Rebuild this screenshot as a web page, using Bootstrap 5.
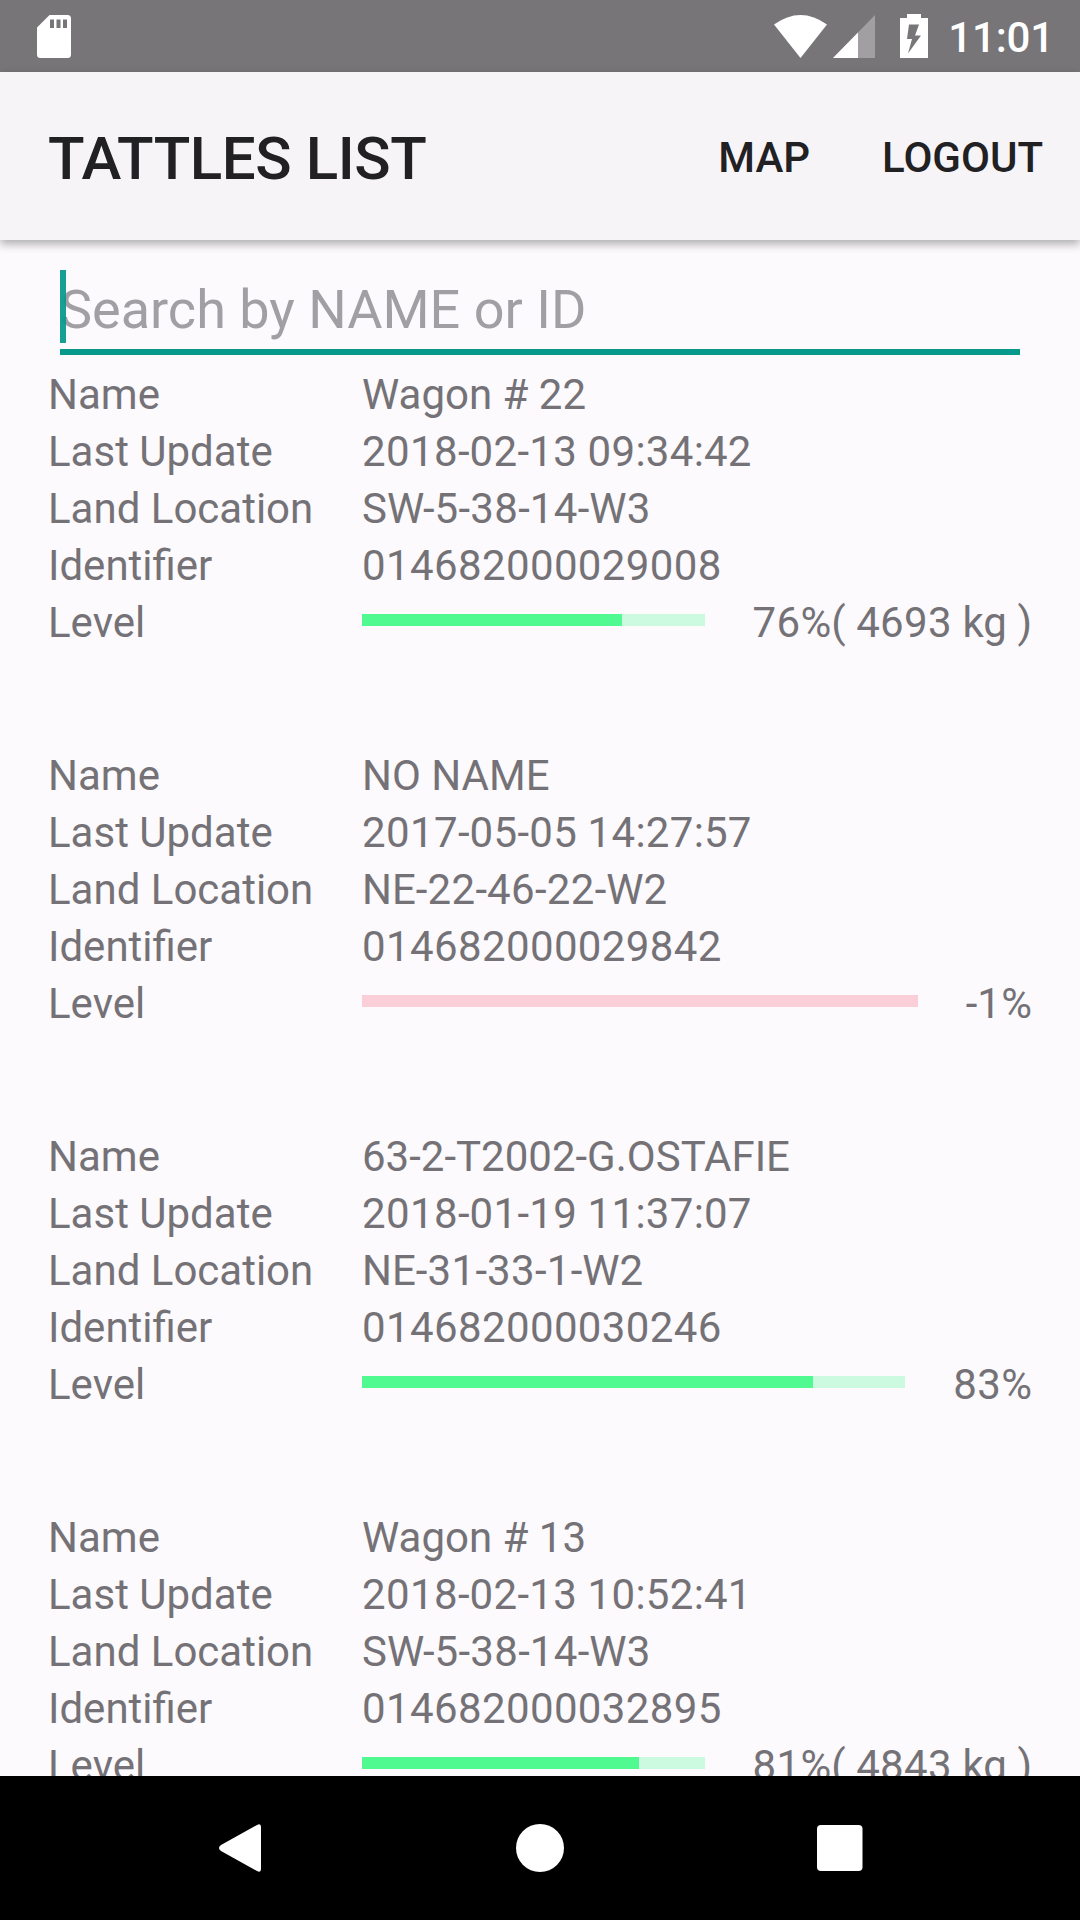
<!DOCTYPE html>
<html lang="en"><head><meta charset="utf-8"><title>Tattles List</title>
<meta name="viewport" content="width=device-width, initial-scale=1">
<link rel="stylesheet" href="https://cdn.jsdelivr.net/npm/bootstrap@5.3.0/dist/css/bootstrap.min.css">
<style>
body{width:1080px;height:1920px;overflow:hidden;font-family:Roboto,sans-serif;background:#fcfafd;color:#757277;font-size:42px;line-height:57px}
.statusbar{height:72px;background:#777578;color:#fff;padding:0 26px 0 37px}
.clock{font-size:42px;font-weight:500;letter-spacing:-.15px;padding-top:2px}
.signal{margin:0 25px 0 6px}
.battery{margin-right:20px}
.appbar{height:168px;background:#f6f4f7;color:#212023;padding:4px 37px 0 48px;box-shadow:0 4px 9px rgba(0,0,0,.32);z-index:2}
.appbar h1{font-size:60px;font-weight:500;line-height:70px;letter-spacing:-.42px;padding-top:2px}
.action{font-size:42px;font-weight:500;color:inherit;text-decoration:none;padding-bottom:2px}
.action + .action{margin-left:72px}
.searchbox{margin:30px 60px 0;height:85px;border-bottom:6px solid #07998b}
.hint{font-size:54px;line-height:79px;color:#a19fa3}
.caret{width:6px;height:73px;background:#07998b;left:0;top:0;opacity:.94}
#list{padding-top:11px}
.tattle{height:381px;padding:0 48px}
.tlabel{width:314px}
.digits{letter-spacing:.38px}
.meter{height:12px;border-radius:0;background:#ccfae0;margin-top:-6px}
.meter .progress-bar{background:#51fa90}
.meter.low{background:#fbcfd7}
.reading{margin-left:48px;white-space:nowrap}
.navkeys{height:144px;background:#000}
</style></head>
<body class="d-flex flex-column">
<header class="statusbar d-flex align-items-center flex-shrink-0">
<svg width="34" height="43" viewBox="0 0 34 43"><path fill="#fff" fill-rule="evenodd" d="M12.500 0H30.500Q34 0 34 3.500V39.500Q34 43 30.500 43H3.500Q0 43 0 39.500V12.500ZM13 4.500V13H17V4.500ZM19.500 4.500V13H23.500V4.500ZM26 4.500V13H30V4.500Z"/></svg>
<svg class="ms-auto" width="53" height="43" viewBox="0 0 53 43"><path fill="#fff" d="M0 9.500Q26.500-9.500 53 9.500L26.500 43Z"/></svg>
<svg class="signal" width="42" height="43" viewBox="0 0 42 43"><path fill="#a19fa2" d="M42 0V43H0Z"/><path fill="#fff" d="M25 17.500V43H0Z"/></svg>
<svg class="battery" width="28" height="44" viewBox="0 0 28 44"><path fill="#fff" fill-rule="evenodd" d="M7 0H21V4H28V44H0V4H7ZM9 10.500L7 25H12L8 39.500L21 21.500H15L19 10.500Z"/></svg>
<span class="clock">11:01</span></header>
<nav class="appbar d-flex align-items-center flex-shrink-0 position-relative"><h1 class="m-0">TATTLES LIST</h1><a class="action ms-auto" href="#">MAP</a><a class="action" href="#">LOGOUT</a></nav>
<main class="flex-grow-1 overflow-hidden"><div class="searchbox position-relative"><div class="hint">Search by NAME or ID</div><div class="caret position-absolute"></div></div><div id="list"></div></main>
<footer class="navkeys flex-shrink-0"><svg class="d-block" width="1080" height="144"><g fill="#fff"><path d="M221 69L257 49Q261 47 261 51V93Q261 97 257 95L221 75Q217 72 221 69Z"/><circle cx="540" cy="72" r="24"/><rect x="817" y="49" width="45.500" height="46" rx="4"/></g></svg></footer>
<script>
const rows=[["Wagon # 22","2018-02-13 09:34:42","SW-5-38-14-W3","014682000029008",76,"76%( 4693 kg )"],["NO NAME","2017-05-05 14:27:57","NE-22-46-22-W2","014682000029842",0,"-1%"],["63-2-T2002-G.OSTAFIE","2018-01-19 11:37:07","NE-31-33-1-W2","014682000030246",83,"83%"],["Wagon # 13","2018-02-13 10:52:41","SW-5-38-14-W3","014682000032895",81,"81%( 4843 kg )"]];
const names=["Name","Last Update","Land Location","Identifier"];
const digits=s=>s.replace(/\d+/g,'<span class="digits">$&</span>');
document.getElementById("list").innerHTML=rows.map(r=>`<section class="tattle">${names.map((n,i)=>`<div class="d-flex"><div class="tlabel">${n}</div><div>${i?digits(r[i]):r[i]}</div></div>`).join("")}<div class="d-flex align-items-center"><div class="tlabel">Level</div><div class="progress meter flex-grow-1 ${r[4]?"":"low"}"><div class="progress-bar" style="width:${r[4]}%"></div></div><div class="reading">${digits(r[5])}</div></div></section>`).join("");
</script>
<script src="https://cdn.jsdelivr.net/npm/bootstrap@5.3.0/dist/js/bootstrap.bundle.min.js"></script>
</body></html>
